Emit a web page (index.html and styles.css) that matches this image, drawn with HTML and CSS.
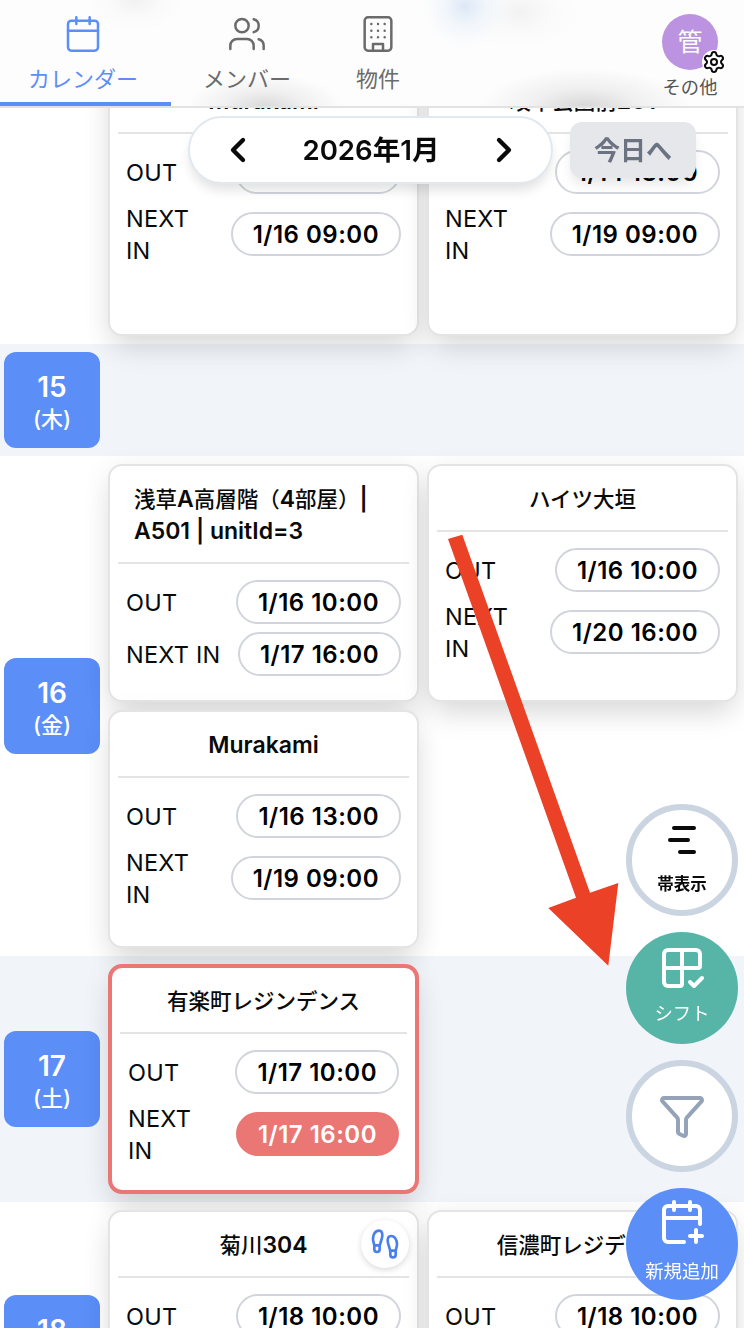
FILE: index.html
```html
<!DOCTYPE html>
<html lang="ja">
<head>
    <meta charset="utf-8">
    <title>カレンダー</title>
    <link rel="stylesheet" href="styles.css">
</head>

<body>
    <header class="header">
        <nav class="tabs">
            <a class="tab tab-calendar active">
                <svg class="icon" viewBox="0 0 24 24"><path d="M8 2v4M16 2v4M3 10h18"/><rect x="3" y="4" width="18" height="18" rx="2"/></svg>
                <span>カレンダー</span>
            </a>
            <a class="tab tab-members">
                <svg class="icon" viewBox="0 0 24 24"><path d="M16 21v-2a4 4 0 0 0-4-4H6a4 4 0 0 0-4 4v2"/><circle cx="9" cy="7" r="4"/><path d="M22 21v-2a4 4 0 0 0-3-3.87M16 3.13a4 4 0 0 1 0 7.75"/></svg>
                <span>メンバー</span>
            </a>
            <a class="tab tab-buildings">
                <svg class="icon" viewBox="0 0 24 24"><rect x="4" y="2" width="16" height="20" rx="2"/><path d="M9 22v-4h6v4M8 6h.01M12 6h.01M16 6h.01M8 10h.01M12 10h.01M16 10h.01M8 14h.01M12 14h.01M16 14h.01"/></svg>
                <span>物件</span>
            </a>
        </nav>
        <div class="account">
            <div class="avatar">管
                <span class="gear"><svg class="icon" viewBox="0 0 24 24"><path d="M9.671 4.136a2.34 2.34 0 0 1 4.659 0 2.34 2.34 0 0 0 3.319 1.915 2.34 2.34 0 0 1 2.33 4.033 2.34 2.34 0 0 0 0 3.831 2.34 2.34 0 0 1-2.33 4.033 2.34 2.34 0 0 0-3.319 1.915 2.34 2.34 0 0 1-4.659 0 2.34 2.34 0 0 0-3.32-1.915 2.34 2.34 0 0 1-2.33-4.033 2.34 2.34 0 0 0 0-3.831A2.34 2.34 0 0 1 6.35 6.051a2.34 2.34 0 0 0 3.319-1.915"/><circle cx="12" cy="12" r="3"/></svg></span>
            </div>
            <span>その他</span>
        </div>
    </header>

    <div class="toolbar">
        <div class="month">
            <svg class="icon" viewBox="0 0 24 24"><path d="m15 18-6-6 6-6"/></svg>
            <span>2026年1月</span>
            <svg class="icon" viewBox="0 0 24 24"><path d="m9 18 6-6-6-6"/></svg>
        </div>
        <button class="today">今日へ</button>
    </div>

    <main class="days">
        <section class="day day-14">
            <div class="date-col"></div>
            <div class="cards">
                <div class="card">
                    <div class="title"><span class="latin">Murakami</span></div>
                    <div class="times">
                        <div class="time"><span>OUT</span><b class="pill">1/14 10:00</b></div>
                        <div class="time"><span>NEXT<br>IN</span><b class="pill">1/16 09:00</b></div>
                    </div>
                </div>
                <div class="card">
                    <div class="title">岐阜公園前<span class="latin">201</span></div>
                    <div class="times">
                        <div class="time"><span>OUT</span><b class="pill">1/14 13:00</b></div>
                        <div class="time"><span>NEXT<br>IN</span><b class="pill">1/19 09:00</b></div>
                    </div>
                </div>
            </div>
        </section>

        <section class="day shaded">
            <div class="date-col"><div class="date">15<small>(木)</small></div></div>
            <div class="cards"></div>
        </section>

        <section class="day">
            <div class="date-col"><div class="date">16<small>(金)</small></div></div>
            <div class="cards">
                <div class="card">
                    <div class="title title-long"><div>浅草<span class="latin">A</span>高層階（<span class="latin">4</span>部屋）<span class="latin">|</span></div><div class="latin">A501 | unitId=3</div></div>
                    <div class="times">
                        <div class="time"><span>OUT</span><b class="pill">1/16 10:00</b></div>
                        <div class="time"><span>NEXT IN</span><b class="pill">1/17 16:00</b></div>
                    </div>
                </div>
                <div class="card">
                    <div class="title">ハイツ大垣</div>
                    <div class="times">
                        <div class="time"><span>OUT</span><b class="pill">1/16 10:00</b></div>
                        <div class="time"><span>NEXT<br>IN</span><b class="pill">1/20 16:00</b></div>
                    </div>
                </div>
                <div class="card">
                    <div class="title"><span class="latin">Murakami</span></div>
                    <div class="times">
                        <div class="time"><span>OUT</span><b class="pill">1/16 13:00</b></div>
                        <div class="time"><span>NEXT<br>IN</span><b class="pill">1/19 09:00</b></div>
                    </div>
                </div>
            </div>
        </section>

        <section class="day shaded">
            <div class="date-col"><div class="date">17<small>(土)</small></div></div>
            <div class="cards">
                <div class="card urgent">
                    <div class="title">有楽町レジンデンス</div>
                    <div class="times">
                        <div class="time"><span>OUT</span><b class="pill">1/17 10:00</b></div>
                        <div class="time"><span>NEXT<br>IN</span><b class="pill pill-urgent">1/17 16:00</b></div>
                    </div>
                </div>
            </div>
        </section>

        <section class="day day-18">
            <div class="date-col"><div class="date">18<small>(日)</small></div></div>
            <div class="cards">
                <div class="card">
                    <div class="title">菊川<span class="latin">304</span></div>
                    <span class="steps"><svg class="icon" viewBox="0 0 24 24"><path d="M4 16v-2.38C4 11.5 2.97 10.5 3 8c.03-2.72 1.49-6 4.5-6C9.37 2 10 3.8 10 5.5c0 3.11-2 5.66-2 8.68V16a2 2 0 1 1-4 0Z"/><path d="M20 20v-2.38c0-2.12 1.03-3.12 1-5.62-.03-2.72-1.49-6-4.5-6C14.63 6 14 7.8 14 9.5c0 3.11 2 5.66 2 8.68V20a2 2 0 1 0 4 0Z"/><path d="M16 17h4M4 13h4"/></svg></span>
                    <div class="times">
                        <div class="time"><span>OUT</span><b class="pill">1/18 10:00</b></div>
                    </div>
                </div>
                <div class="card">
                    <div class="title">信濃町レジデンス</div>
                    <div class="times">
                        <div class="time"><span>OUT</span><b class="pill">1/18 10:00</b></div>
                    </div>
                </div>
            </div>
        </section>
    </main>

    <svg class="arrow" viewBox="0 0 170 431"><path d="M0 4 14.3-.3 142 357.7 170.3 348 160.3 430.7 100.3 373 128 362.7z"/></svg>

    <div class="fabs">
        <button class="fab fab-bars">
            <svg class="icon" viewBox="0 0 24 24"><path d="M8 4h10M6 10h9M11 16h7"/></svg>
            <span>帯表示</span>
        </button>
        <button class="fab fab-shift">
            <svg class="icon" viewBox="0 0 24 24"><path d="M12 3v17a1 1 0 0 1-1 1H5a2 2 0 0 1-2-2V5a2 2 0 0 1 2-2h14a2 2 0 0 1 2 2v6a1 1 0 0 1-1 1H3"/><path d="m16 19 2 2 4-4"/></svg>
            <span>シフト</span>
        </button>
        <button class="fab fab-filter">
            <svg class="icon" viewBox="0 0 24 24"><path d="M10 20a1 1 0 0 0 .553.895l2 1A1 1 0 0 0 14 21v-7a2 2 0 0 1 .517-1.341L21.74 4.67A1 1 0 0 0 21 3H3a1 1 0 0 0-.742 1.67l7.225 7.989A2 2 0 0 1 10 14z"/></svg>
        </button>
        <button class="fab fab-add">
            <svg class="icon" viewBox="0 0 24 24"><path d="M8 2v4M16 2v4M21 13V6a2 2 0 0 0-2-2H5a2 2 0 0 0-2 2v14a2 2 0 0 0 2 2h8M3 10h18M16 19h6M19 16v6"/></svg>
            <span>新規追加</span>
        </button>
    </div>
</body>
</html>
```
FILE: styles.css
```css
* {
    box-sizing: border-box;
}

body {
    margin: 0;
    height: 1328px;
    overflow: hidden;
    position: relative;
    background: #fff;
    color: #0a0a0a;
    font-family: Inter, "Noto Sans CJK JP", sans-serif;
}

button {
    border: 0;
    padding: 0;
    font-family: inherit;
}

.icon {
    display: block;
    fill: none;
    stroke: currentColor;
    stroke-width: 2;
    stroke-linecap: round;
    stroke-linejoin: round;
}

/* header */
.header {
    position: fixed;
    z-index: 3;
    top: 0;
    left: 0;
    width: 100%;
    height: 108px;
    display: flex;
    justify-content: space-between;
    border-bottom: 2px solid #e2e2e2;
    background:
        radial-gradient(ellipse 50px 32px at 135px 0, #f1f1f1, rgba(248, 248, 248, .6) 50%, rgba(253, 253, 253, 0)),
        radial-gradient(ellipse 42px 42px at 465px 6px, #dde8f6, rgba(236, 243, 250, .6) 50%, rgba(253, 253, 253, 0)),
        radial-gradient(ellipse 60px 38px at 520px 12px, #f2f2f2, rgba(248, 248, 248, .6) 50%, rgba(253, 253, 253, 0)),
        radial-gradient(ellipse 78px 34px at 265px 108px, #d8d8d8, rgba(234, 234, 234, .7) 50%, rgba(253, 253, 253, 0)),
        radial-gradient(ellipse 105px 40px at 585px 108px, #d6d6d6, rgba(234, 234, 234, .7) 50%, rgba(253, 253, 253, 0)),
        #fdfdfd;
}

.tabs {
    display: flex;
}

.tab {
    display: flex;
    flex-direction: column;
    align-items: center;
    padding-top: 14px;
    color: #6b6b6b;
    font-size: 22px;
    line-height: 32px;
}

.tab .icon {
    width: 40px;
    height: 40px;
    margin-bottom: 9px;
    stroke-width: 1.5;
}

.tab-calendar {
    width: 171px;
    padding-right: 5px;
}

.tab-members {
    width: 152px;
}

.tab-buildings {
    width: 110px;
}

.tab.active {
    color: #5b8ef7;
    border-bottom: 4px solid #5b8ef7;
}

.account {
    width: 108px;
    padding-top: 14px;
    display: flex;
    flex-direction: column;
    align-items: center;
    color: #555;
    font-size: 18.3px;
    line-height: 34px;
}

.avatar {
    position: relative;
    width: 56px;
    height: 56px;
    border-radius: 50%;
    background: #bb93e0;
    color: #fff;
    font-size: 25px;
    line-height: 57px;
    text-align: center;
}

.gear {
    position: absolute;
    right: -8px;
    bottom: -4px;
    border-radius: 50%;
    background: #fff;
    color: #0a0a0a;
}

.gear .icon {
    width: 24px;
    height: 24px;
}

/* month switcher */
.toolbar {
    position: fixed;
    z-index: 2;
    top: 116px;
    left: 188px;
    display: flex;
    align-items: flex-start;
    gap: 17px;
}

.month {
    width: 365px;
    height: 68px;
    padding: 0 27px 0 28px;
    display: flex;
    align-items: center;
    justify-content: space-between;
    border: 2px solid #e2e8f0;
    border-radius: 34px;
    background: #fff;
    box-shadow: 0 8px 12px -2px rgba(0, 0, 0, .12);
    font-size: 27.6px;
    font-weight: 600;
}

.month span {
    padding-bottom: 4px;
}

.month .icon {
    width: 40px;
    height: 40px;
    stroke-width: 2.6;
}

.today {
    width: 126px;
    height: 56px;
    margin-top: 6px;
    padding-bottom: 3px;
    border-radius: 12px;
    background: #e5e7eb;
    color: #6b7280;
    box-shadow: 0 8px 12px -2px rgba(0, 0, 0, .1);
    font-size: 26px;
    font-weight: 600;
}

/* day rows */
.days {
    padding-top: 58px;
}

.day {
    display: flex;
    align-items: center;
    min-height: 112px;
    padding: 8px 6px 8px 4px;
}

.day.shaded {
    background: #f1f5fa;
}

.date-col {
    width: 104px;
    flex: none;
}

.date {
    width: 96px;
    height: 96px;
    padding-top: 18px;
    border-radius: 12px;
    background: #5b8ef7;
    color: #fff;
    font-size: 28px;
    font-weight: 600;
    line-height: 34px;
    text-align: center;
}

.date small {
    display: block;
    font-size: 22px;
    font-weight: 500;
    line-height: 30px;
}

.cards {
    flex: 1;
    display: grid;
    grid-template-columns: 1fr 1fr;
    grid-auto-rows: 1fr;
    gap: 8px;
}

.card {
    position: relative;
    border: 2px solid #e4e4e4;
    border-radius: 14px;
    background: #fff;
    box-shadow: 0 20px 30px -6px rgba(0, 0, 0, .08), 0 6px 28px rgba(0, 0, 0, .09);
}

.day-14 .card {
    min-height: 270px;
}

.day-18 .card {
    min-height: 266px;
}

.card.urgent {
    border: 4px solid #ea7774;
}

.title {
    display: flex;
    justify-content: center;
    margin: 0 8px;
    padding: 17px 0 15px;
    border-bottom: 2px solid #e4e4e4;
    font-size: 21.5px;
    font-weight: 500;
    line-height: 32px;
    white-space: nowrap;
}

.title-long {
    display: block;
    padding-left: 16px;
}

.title-long > div {
    height: 32px;
}

.latin {
    font-size: 23px;
    font-weight: 600;
}

.times {
    display: flex;
    flex-direction: column;
    gap: 8px;
    padding: 16px 16px 24px;
}

.time {
    display: flex;
    align-items: center;
    justify-content: space-between;
    font-size: 23.5px;
    line-height: 32px;
    letter-spacing: .25px;
}

.time span {
    position: relative;
    top: 1px;
}

.pill {
    height: 44px;
    padding: 0 20px;
    border: 2px solid #d1d5db;
    border-radius: 22px;
    color: #000;
    font-size: 24px;
    font-weight: 600;
    line-height: 41px;
    letter-spacing: .5px;
}

.pill-urgent {
    border-color: #ea7774;
    background: #ea7774;
    color: #fff;
}

.steps {
    position: absolute;
    top: 8px;
    right: 8px;
    padding: 8px;
    border-radius: 50%;
    background: #fff;
    color: #4a80ee;
    box-shadow: 0 2px 6px rgba(0, 0, 0, .15);
}

.steps .icon {
    width: 32px;
    height: 32px;
}

/* pointer to the shift button */
.arrow {
    position: absolute;
    z-index: 4;
    left: 448px;
    top: 535px;
    width: 170px;
    height: 431px;
    overflow: visible;
    fill: #ea4127;
}

/* floating buttons */
.fabs {
    position: fixed;
    z-index: 2;
    right: 6px;
    bottom: 28px;
    display: flex;
    flex-direction: column;
    gap: 16px;
}

.fab {
    width: 112px;
    height: 112px;
    display: flex;
    flex-direction: column;
    align-items: center;
    border-radius: 50%;
    color: #fff;
    font-size: 18.4px;
    line-height: 24px;
    white-space: nowrap;
}

.fab .icon {
    width: 48px;
    height: 48px;
}

.fab-bars {
    padding-top: 10px;
    border: 6px solid #cbd5e1;
    background: #fff;
    color: #0a0a0a;
    font-size: 16.5px;
    font-weight: 700;
}

.fab-bars span {
    margin-top: 4px;
}

.fab-shift {
    padding-top: 12px;
    background: #56b5a7;
}

.fab-shift span {
    margin-top: 9px;
}

.fab-filter {
    justify-content: center;
    border: 6px solid #cbd5e1;
    background: #fff;
    color: #94a3b8;
}

.fab-add {
    padding-top: 10px;
    background: #5b8ef7;
}

.fab-add span {
    margin-top: 13px;
}
```
